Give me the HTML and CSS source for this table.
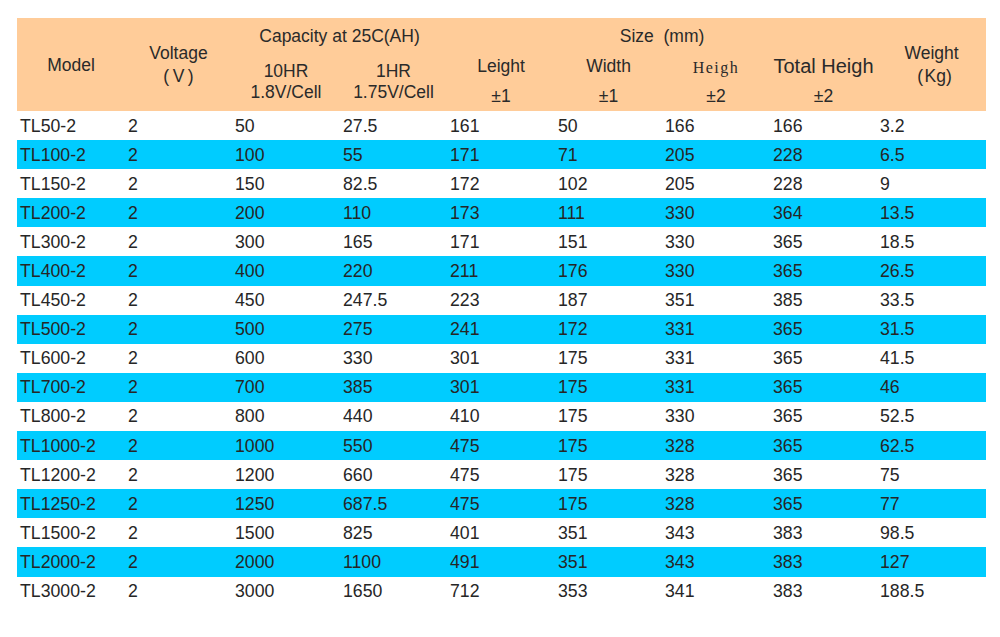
FILE: index.html
```html
<!DOCTYPE html>
<html lang="en">
<head>
<meta charset="utf-8">
<title>Battery specifications</title>
<link rel="stylesheet" href="styles.css">
</head>
<body>
<table class="spec">
  <colgroup>
    <col class="c108"><col class="c107"><col class="c108"><col class="c107"><col class="c108"><col class="c107"><col class="c108"><col class="c107"><col class="c109">
  </colgroup>
  <thead>
    <tr class="hr1">
      <th rowspan="2" class="mid">Model</th>
      <th rowspan="2" class="mid two"><span class="ln">Voltage</span><span class="ln">(&#8201;V&#8201;)</span></th>
      <th colspan="2" class="top">Capacity at 25C(AH)</th>
      <th colspan="4" class="top">Size&nbsp;&nbsp;(mm)</th>
      <th rowspan="2" class="mid two"><span class="ln">Weight</span><span class="ln kg">(&#8202;Kg)</span></th>
    </tr>
    <tr class="hr2">
      <th class="cap"><span class="ln">10HR</span><span class="ln">1.8V/Cell</span></th>
      <th class="cap"><span class="ln">1HR</span><span class="ln">1.75V/Cell</span></th>
      <th class="sz"><span class="ln">Leight</span><span class="ln tol">±1</span></th>
      <th class="sz"><span class="ln">Width</span><span class="ln tol">±1</span></th>
      <th class="sz"><span class="ln serif">Heigh</span><span class="ln tol tol-s">±2</span></th>
      <th class="sz"><span class="ln big">Total Heigh</span><span class="ln tol">±2</span></th>
    </tr>
  </thead>
  <tbody>
    <tr><td>TL50-2</td><td>2</td><td>50</td><td>27.5</td><td>161</td><td>50</td><td>166</td><td>166</td><td>3.2</td></tr>
    <tr class="alt"><td>TL100-2</td><td>2</td><td>100</td><td>55</td><td>171</td><td>71</td><td>205</td><td>228</td><td>6.5</td></tr>
    <tr><td>TL150-2</td><td>2</td><td>150</td><td>82.5</td><td>172</td><td>102</td><td>205</td><td>228</td><td>9</td></tr>
    <tr class="alt"><td>TL200-2</td><td>2</td><td>200</td><td>110</td><td>173</td><td>111</td><td>330</td><td>364</td><td>13.5</td></tr>
    <tr><td>TL300-2</td><td>2</td><td>300</td><td>165</td><td>171</td><td>151</td><td>330</td><td>365</td><td>18.5</td></tr>
    <tr class="alt"><td>TL400-2</td><td>2</td><td>400</td><td>220</td><td>211</td><td>176</td><td>330</td><td>365</td><td>26.5</td></tr>
    <tr><td>TL450-2</td><td>2</td><td>450</td><td>247.5</td><td>223</td><td>187</td><td>351</td><td>385</td><td>33.5</td></tr>
    <tr class="alt"><td>TL500-2</td><td>2</td><td>500</td><td>275</td><td>241</td><td>172</td><td>331</td><td>365</td><td>31.5</td></tr>
    <tr><td>TL600-2</td><td>2</td><td>600</td><td>330</td><td>301</td><td>175</td><td>331</td><td>365</td><td>41.5</td></tr>
    <tr class="alt"><td>TL700-2</td><td>2</td><td>700</td><td>385</td><td>301</td><td>175</td><td>331</td><td>365</td><td>46</td></tr>
    <tr><td>TL800-2</td><td>2</td><td>800</td><td>440</td><td>410</td><td>175</td><td>330</td><td>365</td><td>52.5</td></tr>
    <tr class="alt"><td>TL1000-2</td><td>2</td><td>1000</td><td>550</td><td>475</td><td>175</td><td>328</td><td>365</td><td>62.5</td></tr>
    <tr><td>TL1200-2</td><td>2</td><td>1200</td><td>660</td><td>475</td><td>175</td><td>328</td><td>365</td><td>75</td></tr>
    <tr class="alt"><td>TL1250-2</td><td>2</td><td>1250</td><td>687.5</td><td>475</td><td>175</td><td>328</td><td>365</td><td>77</td></tr>
    <tr><td>TL1500-2</td><td>2</td><td>1500</td><td>825</td><td>401</td><td>351</td><td>343</td><td>383</td><td>98.5</td></tr>
    <tr class="alt"><td>TL2000-2</td><td>2</td><td>2000</td><td>1100</td><td>491</td><td>351</td><td>343</td><td>383</td><td>127</td></tr>
    <tr><td>TL3000-2</td><td>2</td><td>3000</td><td>1650</td><td>712</td><td>353</td><td>341</td><td>383</td><td>188.5</td></tr>
  </tbody>
</table>
</body>
</html>
```

FILE: styles.css
```css
html, body {
  margin: 0;
  padding: 0;
  background: #ffffff;
}

body {
  font-family: "Liberation Sans", Arial, sans-serif;
  color: #262626;
}

.spec {
  margin: 18px 0 0 17px;
  border-collapse: collapse;
  border-spacing: 0;
  table-layout: fixed;
  width: 969px;
}

.c108 { width: 108px; }
.c107 { width: 107px; }
.c109 { width: 109px; }

.spec th {
  background: #ffcc99;
  font-weight: normal;
  font-size: 17.5px;
  padding: 0;
  text-align: center;
  color: #2a2a2a;
}

.hr1 { height: 34px; }
.hr2 { height: 59px; }

.spec th.mid {
  vertical-align: middle;
  line-height: 22px;
}

.spec th.two .ln {
  display: block;
  line-height: 22.5px;
}

.spec th .kg {
  padding-left: 6px;
}

.spec th.top {
  vertical-align: top;
  padding-top: 7px;
  line-height: 22px;
}

.spec th.cap,
.spec th.sz {
  vertical-align: top;
}

.spec th.cap { padding-top: 8px; }
.spec th.sz { padding-top: 3px; }

.spec th .ln {
  display: block;
  line-height: 22px;
}

.spec th.cap .ln + .ln {
  line-height: 21.5px;
}

.spec th .tol {
  margin-top: 8px;
}

.spec th .serif {
  font-family: "Liberation Serif", "Times New Roman", serif;
  font-size: 16px;
  letter-spacing: 1.5px;
  padding-top: 2px;
  line-height: 22px;
}

.spec th .tol-s {
  margin-top: 6px;
}

.spec th .big {
  font-size: 20px;
}

.spec tbody tr {
  height: 29.1px;
}

.spec tbody tr.alt {
  background: #00ccff;
}

.spec td {
  padding: 0 0 0 3px;
  font-size: 17.7px;
  line-height: 20px;
  vertical-align: middle;
  white-space: nowrap;
}
```
